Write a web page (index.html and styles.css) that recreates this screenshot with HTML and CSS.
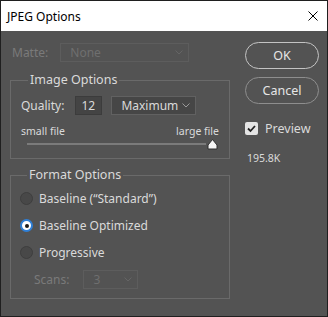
FILE: index.html
```html
<!DOCTYPE html>
<html>

	<head>
		<meta charset="utf-8" />
		<title>JPEG Options</title>
		<link rel="stylesheet" href="styles.css">
	</head>

	<body>
		<div class="window">
			<div class="titlebar">
				<span class="title">JPEG Options</span>
				<svg class="close" width="10" height="10" viewBox="0 0 10 10">
					<path d="M0.5 0.5 L9.5 9.5 M9.5 0.5 L0.5 9.5" stroke="#000" stroke-width="1" fill="none" />
				</svg>
			</div>
			<div class="content">
				<div class="left">
					<div class="matte-row">
						<span class="label disabled">Matte:</span>
						<div class="select select-matte disabled">
							<span>None</span>
							<svg class="chev" width="8" height="5" viewBox="0 0 8 5"><path d="M0.5 0.5 L4 4 L7.5 0.5" stroke="currentColor" fill="none" /></svg>
						</div>
					</div>

					<fieldset class="group">
						<legend>Image Options</legend>
						<div class="quality-row">
							<span class="label">Quality:</span>
							<div class="input">12</div>
							<div class="select select-quality">
								<span>Maximum</span>
								<svg class="chev" width="8" height="5" viewBox="0 0 8 5"><path d="M0.5 0.5 L4 4 L7.5 0.5" stroke="currentColor" fill="none" /></svg>
							</div>
						</div>
						<div class="size-row">
							<span>small file</span>
							<span>large file</span>
						</div>
						<div class="slider">
							<div class="track"></div>
							<svg class="thumb" width="11" height="12" viewBox="0 0 11 12">
								<path d="M1 11 V7 L5.5 1.5 L10 7 V11 Z" fill="#f4f4f4" stroke="#2e2e2e" stroke-width="1" stroke-linejoin="round" />
							</svg>
						</div>
					</fieldset>

					<fieldset class="group group-format">
						<legend>Format Options</legend>
						<div class="radio-row">
							<span class="radio"></span>
							<span>Baseline (&ldquo;Standard&rdquo;)</span>
						</div>
						<div class="radio-row">
							<span class="radio checked"></span>
							<span>Baseline Optimized</span>
						</div>
						<div class="radio-row">
							<span class="radio"></span>
							<span>Progressive</span>
						</div>
						<div class="scans-row">
							<span class="label disabled">Scans:</span>
							<div class="select select-scans disabled">
								<span>3</span>
								<svg class="chev" width="8" height="5" viewBox="0 0 8 5"><path d="M0.5 0.5 L4 4 L7.5 0.5" stroke="currentColor" fill="none" /></svg>
							</div>
						</div>
					</fieldset>
				</div>

				<div class="right">
					<button class="btn btn-ok">OK</button>
					<button class="btn">Cancel</button>
					<div class="check-row">
						<span class="checkbox">
							<svg width="13" height="13" viewBox="0 0 13 13"><path d="M3 6.5 L5.5 9 L10 4" stroke="#222" stroke-width="1.8" fill="none" /></svg>
						</span>
						<span>Preview</span>
					</div>
					<div class="filesize">195.8K</div>
				</div>
			</div>
		</div>
	</body>

</html>
```

FILE: styles.css
```css
* {
	box-sizing: border-box;
}

body {
	margin: 0;
	font-family: "Noto Sans", "Open Sans", sans-serif;
	font-size: 12px;
	color: #dadada;
}

.window {
	width: 328px;
	height: 317px;
	border: 1px solid #1f1f1f;
	background: #535353;
	display: flex;
	flex-direction: column;
}

.titlebar {
	height: 30px;
	background: #fff;
	color: #000;
	display: flex;
	align-items: center;
	justify-content: space-between;
	padding: 0 9px 0 6px;
	font-size: 12px;
	flex-shrink: 0;
}

.close {
	display: block;
}

.content {
	display: flex;
	padding: 11px 8px 0 9px;
	gap: 15px;
}

.left {
	width: 220px;
}

.right {
	width: 74px;
	display: flex;
	flex-direction: column;
}

.disabled {
	color: #7a7a7a;
}

.matte-row {
	display: flex;
	align-items: center;
	height: 20px;
	padding-left: 2px;
	gap: 12px;
}

.select {
	display: flex;
	align-items: center;
	justify-content: space-between;
	height: 19px;
	border: 1px solid #626262;
	background: #4a4a4a;
	padding: 0 5px 0 9px;
	color: #dadada;
}

.select .chev {
	color: #9a9a9a;
}

.select.disabled {
	background: #535353;
	border-color: #5d5d5d;
	color: #6f6f6f;
}

.select.disabled .chev {
	color: #656565;
}

.select-matte {
	width: 129px;
}

.group {
	margin: 9px 0 0;
	border: 1px solid #6a6a6a;
	padding: 0 9px 0 10px;
	min-width: 0;
}

.group legend {
	margin-left: 7px;
	padding: 0 2px;
	font-size: 12.5px;
	line-height: 18px;
}

.quality-row {
	display: flex;
	align-items: center;
	margin-top: 6px;
	height: 20px;
}

.input {
	width: 27px;
	height: 19px;
	margin-left: 11px;
	background: #444;
	border: 1px solid #3c3c3c;
	padding-left: 5px;
	line-height: 17px;
}

.select-quality {
	width: 85px;
	margin-left: 9px;
	border-color: #616161;
	background: #464646;
}

.size-row {
	display: flex;
	justify-content: space-between;
	font-size: 10.5px;
	margin-top: 9px;
	padding-right: 1px;
	line-height: 14px;
}

.slider {
	position: relative;
	height: 20px;
}

.track {
	position: absolute;
	left: 6px;
	right: 14px;
	top: 5px;
	height: 2px;
	background: #7b7b7b;
}

.thumb {
	position: absolute;
	left: 186px;
	top: 0;
}

.group-format {
	margin-top: 7px;
	padding: 0 9px 5px 9px;
}

.radio-row {
	display: flex;
	align-items: center;
	height: 27px;
	gap: 6px;
}

.radio-row:first-of-type {
	margin-top: 1px;
}

.radio {
	width: 13px;
	height: 13px;
	border-radius: 50%;
	background: #484848;
	border: 1px solid #3e3e3e;
	position: relative;
}

.radio.checked {
	background: #fff;
	border: 2px solid #2f7fd6;
}

.radio.checked::after {
	content: "";
	position: absolute;
	left: 2.5px;
	top: 2.5px;
	width: 4px;
	height: 4px;
	border-radius: 50%;
	background: #1a1a1a;
}

.scans-row {
	display: flex;
	align-items: center;
	height: 27px;
	padding-left: 14px;
	gap: 14px;
}

.select-scans {
	width: 55px;
}

.btn {
	height: 27px;
	border-radius: 14px;
	background: transparent;
	border: 1px solid #c4c4c4;
	color: #e6e6e6;
	font-family: inherit;
	font-size: 12.5px;
	padding: 0;
}

.btn + .btn {
	margin-top: 8px;
	border-color: #8e8e8e;
}

.check-row {
	display: flex;
	align-items: center;
	gap: 7px;
	margin-top: 16px;
	font-size: 12.5px;
}

.checkbox {
	width: 13px;
	height: 13px;
	background: #e4e4e4;
	border-radius: 2px;
	display: flex;
}

.filesize {
	margin-top: 14px;
	padding-left: 2px;
	font-size: 10.5px;
}
```
